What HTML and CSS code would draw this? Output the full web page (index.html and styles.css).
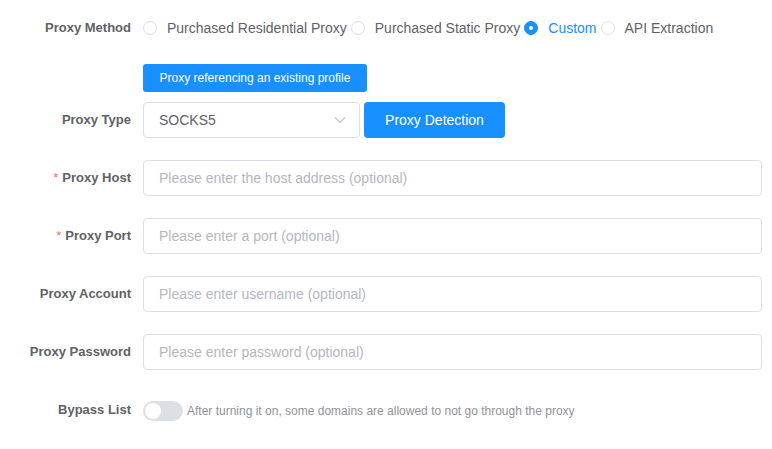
FILE: index.html
```html
<!DOCTYPE html>
<html lang="en">
<head>
<meta charset="utf-8">
<title>Proxy Settings</title>
<link rel="stylesheet" href="styles.css">
</head>
<body>
<form class="form">
  <div class="row row-method">
    <div class="label">Proxy Method</div>
    <div class="content radios">
      <label class="radio"><span class="dot"></span><span class="radio-text">Purchased Residential Proxy</span></label>
      <label class="radio"><span class="dot"></span><span class="radio-text">Purchased Static Proxy</span></label>
      <label class="radio is-checked"><span class="dot"></span><span class="radio-text">Custom</span></label>
      <label class="radio"><span class="dot"></span><span class="radio-text">API Extraction</span></label>
    </div>
  </div>

  <div class="row row-ref">
    <div class="label"></div>
    <div class="content">
      <button type="button" class="btn-ref">Proxy referencing an existing profile</button>
    </div>
  </div>

  <div class="row row-field">
    <div class="label">Proxy Type</div>
    <div class="content type-content">
      <div class="select">
        <span class="select-value">SOCKS5</span>
        <svg class="chevron" width="12" height="8" viewBox="0 0 12 8"><path d="M1 1.5 L6 6.5 L11 1.5" fill="none" stroke="#c0c4cc" stroke-width="1.2"/></svg>
      </div>
      <button type="button" class="btn-detect">Proxy Detection</button>
    </div>
  </div>

  <div class="row row-field">
    <div class="label required">Proxy Host</div>
    <div class="content"><input class="input" type="text" placeholder="Please enter the host address (optional)"></div>
  </div>

  <div class="row row-field">
    <div class="label required">Proxy Port</div>
    <div class="content"><input class="input" type="text" placeholder="Please enter a port (optional)"></div>
  </div>

  <div class="row row-field">
    <div class="label">Proxy Account</div>
    <div class="content"><input class="input" type="text" placeholder="Please enter username (optional)"></div>
  </div>

  <div class="row row-field row-password">
    <div class="label">Proxy Password</div>
    <div class="content"><input class="input" type="text" placeholder="Please enter password (optional)"></div>
  </div>

  <div class="row row-bypass">
    <div class="label">Bypass List</div>
    <div class="content bypass-content">
      <span class="switch"><span class="knob"></span></span>
      <span class="hint">After turning it on, some domains are allowed to not go through the proxy</span>
    </div>
  </div>
</form>
</body>
</html>
```

FILE: styles.css
```css
* { box-sizing: border-box; }

html, body {
  margin: 0;
  padding: 0;
  background: #ffffff;
}

body {
  font-family: "Liberation Sans", Arial, sans-serif;
  font-size: 14px;
  color: #606266;
}

.form {
  padding: 10px 10px 0 0;
  width: 772px;
}

.row {
  display: flex;
  align-items: center;
  height: 36px;
  margin-bottom: 22px;
}

.row-method { margin-bottom: 18px; }

.row-ref {
  height: 28px;
  margin-bottom: 10px;
}

.row-password { margin-bottom: 23px; }

.label {
  flex: 0 0 143px;
  width: 143px;
  padding-right: 12px;
  padding-bottom: 1px;
  text-align: right;
  font-size: 13px;
  font-weight: bold;
  color: #606266;
  white-space: nowrap;
}

.row-bypass .label { padding-bottom: 3px; }

.label.required::before {
  content: "*";
  color: #f56c6c;
  margin-right: 4px;
  font-weight: normal;
}

.content {
  flex: 1 1 auto;
  display: flex;
  align-items: center;
  min-width: 0;
}

/* radios */
.radios { gap: 4px; }

.radio {
  display: inline-flex;
  align-items: center;
  gap: 10px;
  cursor: pointer;
  white-space: nowrap;
}

.dot {
  width: 14px;
  height: 14px;
  border: 1px solid #dcdfe6;
  border-radius: 50%;
  background: #fff;
  position: relative;
  flex: 0 0 14px;
}

.radio-text {
  font-size: 14px;
  color: #606266;
}

.radio.is-checked .dot {
  background: #1890ff;
  border-color: #1890ff;
}

.radio.is-checked .dot::after {
  content: "";
  position: absolute;
  width: 4px;
  height: 4px;
  border-radius: 50%;
  background: #fff;
  left: 4px;
  top: 4px;
}

.radio.is-checked .radio-text { color: #1890ff; }

/* buttons */
.btn-ref {
  height: 28px;
  width: 224px;
  padding: 0;
  border: none;
  border-radius: 3px;
  background: #1890ff;
  color: #fff;
  font-family: inherit;
  font-size: 12px;
  font-weight: 500;
  cursor: pointer;
}

.type-content { gap: 4px; }

.select {
  width: 217px;
  height: 36px;
  border: 1px solid #dcdfe6;
  border-radius: 4px;
  display: flex;
  align-items: center;
  justify-content: space-between;
  padding: 0 13px 0 15px;
  background: #fff;
}

.select-value {
  font-size: 14px;
  color: #606266;
}

.chevron { display: block; }

.btn-detect {
  height: 36px;
  width: 141px;
  padding: 0;
  border: none;
  border-radius: 4px;
  background: #1890ff;
  color: #fff;
  font-family: inherit;
  font-size: 14px;
  cursor: pointer;
}

/* inputs */
.input {
  width: 100%;
  height: 36px;
  border: 1px solid #dcdfe6;
  border-radius: 4px;
  padding: 0 15px;
  font-family: inherit;
  font-size: 14px;
  color: #606266;
  background: #fff;
  outline: none;
}

.input::placeholder { color: #b4b7be; }

/* switch */
.bypass-content { gap: 4px; }

.switch {
  position: relative;
  width: 40px;
  height: 20px;
  border-radius: 10px;
  background: #dcdfe6;
  flex: 0 0 40px;
}

.knob {
  position: absolute;
  left: 2px;
  top: 2px;
  width: 16px;
  height: 16px;
  border-radius: 50%;
  background: #fff;
}

.hint {
  font-size: 12px;
  color: #909399;
  white-space: nowrap;
}
```
